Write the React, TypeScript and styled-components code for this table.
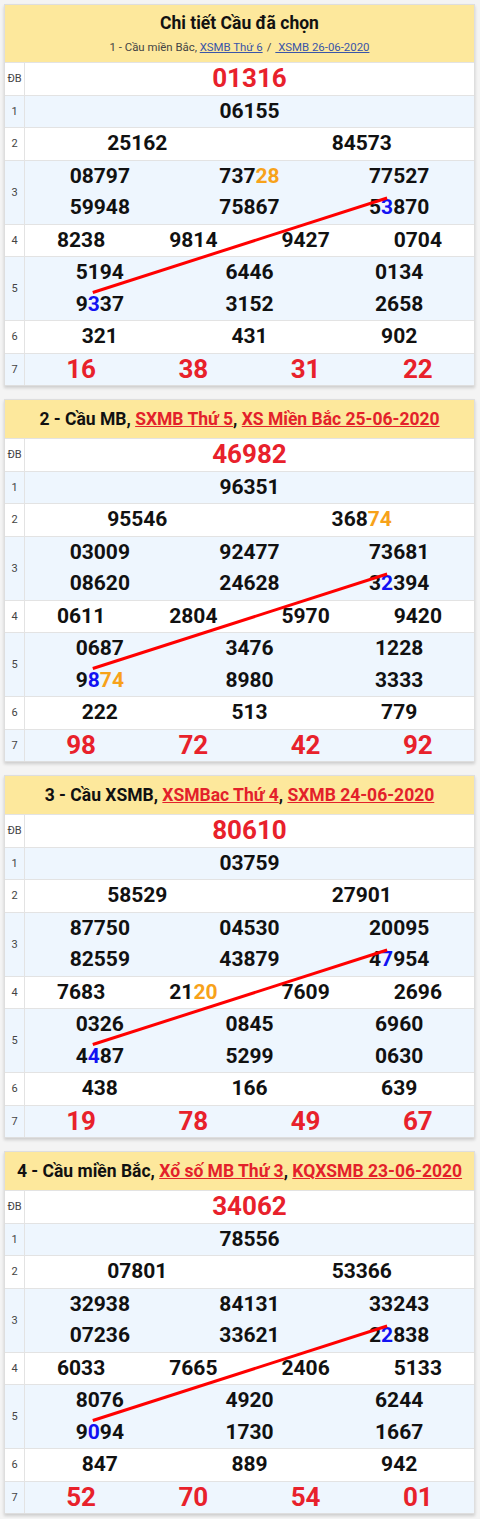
import React, { useLayoutEffect, useRef, useState } from 'react';
import styled, { createGlobalStyle } from 'styled-components';

const GlobalStyle = createGlobalStyle`
  html, body { margin: 0; padding: 0; background: #f4f4f4; }
  body { font-family: Roboto, "Noto Sans", Arial, sans-serif; }
`;

const Page = styled.main`
  display: flex;
  flex-direction: column;
  gap: 13px;
  padding: 4px 5px 4px 4px;
`;

const Card = styled.section`
  background: #fff;
  border: 1px solid #dedede;
  box-shadow: 0 2px 3px rgba(0, 0, 0, 0.16);
`;

const Header = styled.header<{ $sub?: boolean }>`
  background: #fde89c;
  text-align: center;
  padding: ${(p) => (p.$sub ? '7px 6px 6px' : '8px 6px')};
  border-bottom: 1px solid #e3e3e3;
`;

const Title = styled.h2`
  margin: 0;
  font-size: 17.5px;
  line-height: 22px;
  font-weight: 700;
  color: #111;
`;

const Sub = styled.div`
  margin-top: 4px;
  font-size: 11.4px;
  line-height: 18px;
  color: #444;
`;

const SubLink = styled.a`
  color: #3a55a8;
  text-decoration: underline;
`;

const RedLink = styled.a`
  color: #e3212a;
  text-decoration: underline;
`;

const Sep = styled.span`
  margin: 0 4px;
`;

const Body = styled.div`
  position: relative;
`;

const Row = styled.div<{ $alt: boolean }>`
  display: grid;
  grid-template-columns: 20px 1fr;
  background: ${(p) => (p.$alt ? '#eef6fe' : '#fff')};
  & + & {
    border-top: 1px solid #e3e3e3;
  }
`;

const Label = styled.div`
  display: flex;
  align-items: center;
  justify-content: center;
  border-right: 1px solid #e3e3e3;
  font-size: 11px;
  color: #444;
`;

const Cells = styled.div<{ $cols: number }>`
  display: grid;
  grid-template-columns: repeat(${(p) => p.$cols}, 1fr);
  text-align: center;
`;

const Num = styled.div<{ $big?: boolean; $red?: boolean }>`
  font-weight: 700;
  font-size: ${(p) => (p.$big ? '26px' : '21px')};
  line-height: 31.5px;
  color: ${(p) => (p.$red ? '#e8212b' : '#111')};
`;

const Orange = styled.span`
  color: #f7a21a;
`;

const Blue = styled.span`
  color: #1212f2;
`;

const Overlay = styled.svg`
  position: absolute;
  inset: 0;
  width: 100%;
  height: 100%;
  pointer-events: none;
  overflow: visible;
`;

type RowData = { label: string; cols: number; nums: string[]; kind?: 'db' | 'g7' };

type CardData = {
  title: React.ReactNode;
  sub?: React.ReactNode;
  rows: RowData[];
};

const mkRows = (
  db: string,
  g1: string,
  g2: string[],
  g3: string[],
  g4: string[],
  g5: string[],
  g6: string[],
  g7: string[]
): RowData[] => [
  { label: 'ĐB', cols: 1, nums: [db], kind: 'db' },
  { label: '1', cols: 1, nums: [g1] },
  { label: '2', cols: 2, nums: g2 },
  { label: '3', cols: 3, nums: g3 },
  { label: '4', cols: 4, nums: g4 },
  { label: '5', cols: 3, nums: g5 },
  { label: '6', cols: 3, nums: g6 },
  { label: '7', cols: 4, nums: g7, kind: 'g7' },
];

const cards: CardData[] = [
  {
    title: 'Chi tiết Cầu đã chọn',
    sub: (
      <>
        1 - Cầu miền Bắc, <SubLink>XSMB Thứ 6</SubLink>
        <Sep>/</Sep>
        <SubLink>&nbsp;XSMB 26-06-2020</SubLink>
      </>
    ),
    rows: mkRows(
      '01316',
      '06155',
      ['25162', '84573'],
      ['08797', '737{28}', '77527', '59948', '75867', '5[3]870'],
      ['8238', '9814', '9427', '0704'],
      ['5194', '6446', '0134', '9[3]37', '3152', '2658'],
      ['321', '431', '902'],
      ['16', '38', '31', '22']
    ),
  },
  {
    title: (
      <>
        2 - Cầu MB, <RedLink>SXMB Thứ 5</RedLink>, <RedLink>XS Miền Bắc 25-06-2020</RedLink>
      </>
    ),
    rows: mkRows(
      '46982',
      '96351',
      ['95546', '368{74}'],
      ['03009', '92477', '73681', '08620', '24628', '3[2]394'],
      ['0611', '2804', '5970', '9420'],
      ['0687', '3476', '1228', '9[8]{74}', '8980', '3333'],
      ['222', '513', '779'],
      ['98', '72', '42', '92']
    ),
  },
  {
    title: (
      <>
        3 - Cầu XSMB, <RedLink>XSMBac Thứ 4</RedLink>, <RedLink>SXMB 24-06-2020</RedLink>
      </>
    ),
    rows: mkRows(
      '80610',
      '03759',
      ['58529', '27901'],
      ['87750', '04530', '20095', '82559', '43879', '4[7]954'],
      ['7683', '21{20}', '7609', '2696'],
      ['0326', '0845', '6960', '4[4]87', '5299', '0630'],
      ['438', '166', '639'],
      ['19', '78', '49', '67']
    ),
  },
  {
    title: (
      <>
        4 - Cầu miền Bắc, <RedLink>Xổ số MB Thứ 3</RedLink>, <RedLink>KQXSMB 23-06-2020</RedLink>
      </>
    ),
    rows: mkRows(
      '34062',
      '78556',
      ['07801', '53366'],
      ['32938', '84131', '33243', '07236', '33621', '2[2]838'],
      ['6033', '7665', '2406', '5133'],
      ['8076', '4920', '6244', '9[0]94', '1730', '1667'],
      ['847', '889', '942'],
      ['52', '70', '54', '01']
    ),
  },
];

type Seg = { t: string; c: 'n' | 'o' | 'b' };

const parse = (s: string): Seg[] => {
  const out: Seg[] = [];
  const re = /\{([^}]*)\}|\[([^\]]*)\]|([^{[]+)/g;
  let m: RegExpExecArray | null;
  while ((m = re.exec(s))) {
    if (m[1] !== undefined) out.push({ t: m[1], c: 'o' });
    else if (m[2] !== undefined) out.push({ t: m[2], c: 'b' });
    else out.push({ t: m[3], c: 'n' });
  }
  return out;
};

type Line = { x1: number; y1: number; x2: number; y2: number };

function LottoCard({ data }: { data: CardData }) {
  const bodyRef = useRef<HTMLDivElement>(null);
  const marks = useRef<(HTMLSpanElement | null)[]>([]);
  const [line, setLine] = useState<Line | null>(null);

  useLayoutEffect(() => {
    const measure = () => {
      const b = bodyRef.current;
      const end = marks.current[0];
      const start = marks.current[1];
      if (!b || !start || !end) return;
      const br = b.getBoundingClientRect();
      const s = start.getBoundingClientRect();
      const e = end.getBoundingClientRect();
      setLine({
        x1: s.left + s.width / 2 - br.left - 1,
        y1: s.top - br.top + 1,
        x2: e.left + e.width / 2 - br.left,
        y2: e.top - br.top + 3,
      });
    };
    measure();
    if (document.fonts) document.fonts.ready.then(measure);
  }, []);

  let markIdx = 0;

  return (
    <Card>
      <Header $sub={!!data.sub}>
        <Title>{data.title}</Title>
        {data.sub && <Sub>{data.sub}</Sub>}
      </Header>
      <Body ref={bodyRef}>
        {data.rows.map((r, ri) => (
          <Row key={r.label} $alt={ri % 2 === 1}>
            <Label>{r.label}</Label>
            <Cells $cols={r.cols}>
              {r.nums.map((n, ni) => (
                <Num key={ni} $big={!!r.kind} $red={!!r.kind}>
                  {parse(n).map((sg, si) => {
                    if (sg.c === 'o') return <Orange key={si}>{sg.t}</Orange>;
                    if (sg.c === 'b') {
                      const idx = markIdx++;
                      return (
                        <Blue
                          key={si}
                          ref={(el) => {
                            marks.current[idx] = el;
                          }}
                        >
                          {sg.t}
                        </Blue>
                      );
                    }
                    return <React.Fragment key={si}>{sg.t}</React.Fragment>;
                  })}
                </Num>
              ))}
            </Cells>
          </Row>
        ))}
        {line && (
          <Overlay>
            <line x1={line.x1} y1={line.y1} x2={line.x2} y2={line.y2} stroke="#ff0000" strokeWidth={3} />
          </Overlay>
        )}
      </Body>
    </Card>
  );
}

export default function App() {
  return (
    <>
      <GlobalStyle />
      <Page>
        {cards.map((c, i) => (
          <LottoCard key={i} data={c} />
        ))}
      </Page>
    </>
  );
}
